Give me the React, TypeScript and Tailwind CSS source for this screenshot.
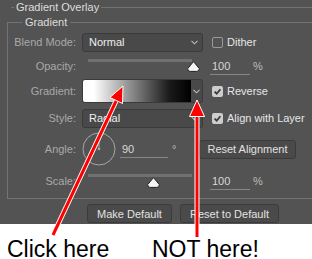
import React from "react"

const Chevron = () => (
  <svg width="7" height="5" viewBox="0 0 7 5" className="shrink-0">
    <polyline points="0.5,0.8 3.5,3.8 6.5,0.8" fill="none" stroke="#bdbdbd" strokeWidth="1.1" />
  </svg>
)

const Check = ({ checked, label }: { checked?: boolean; label: string }) => (
  <div className="flex items-center ml-[9px]">
    {checked ? (
      <div className="w-[11px] h-[11px] rounded-[2px] bg-[#cdcdcd] flex items-center justify-center">
        <svg width="9" height="9" viewBox="0 0 9 9">
          <path d="M1.6 4.6 L3.7 6.7 L7.4 2.2" fill="none" stroke="#3a3a3a" strokeWidth="1.8" />
        </svg>
      </div>
    ) : (
      <div className="w-[11px] h-[11px] rounded-[2px] border border-[#9a9a9a]" />
    )}
    <span className="ml-[4px] text-[#e6e6e6]">{label}</span>
  </div>
)

const Thumb = () => (
  <svg width="13" height="11" viewBox="0 0 13 11">
    <path d="M6.5 0.6 L12.3 7.6 Q12.5 10.4 9.8 10.4 H3.2 Q0.5 10.4 0.7 7.6 Z" fill="#f4f4f4" stroke="#1e1e1e" strokeWidth="1" />
  </svg>
)

// track + thumb, thumb sits over the track
const Slider = ({ thumb, trackTop, thumbTop }: { thumb: number; trackTop: number; thumbTop: number }) => (
  <div className="relative w-[121px] h-full">
    <div className="absolute left-[6px] w-[104px] h-[3px] bg-[#707070]" style={{ top: trackTop }} />
    <div className="absolute" style={{ left: thumb, top: thumbTop }}>
      <Thumb />
    </div>
  </div>
)

const Value = ({ value }: { value: string }) => (
  <>
    <div className="ml-[7px] w-[40px] h-[17px] flex items-center border-b border-[#858585] pl-[2px] text-[#d8d8d8]">
      {value}
    </div>
    <span className="ml-[3px] text-[#bdbdbd]">%</span>
  </>
)

const Label = ({ children }: { children: React.ReactNode }) => (
  <div className="w-[68px] text-right text-[#a9a9a9]">{children}</div>
)

export default function App() {
  return (
    <div className="relative w-[312px] h-[259px] overflow-hidden bg-white font-['Liberation_Sans',Arial,sans-serif]">
      <div className="h-[224px] bg-[#535353] text-[11px] leading-[14px]">
        <div className="flex items-center h-[14px]">
          <div className="ml-[11px] w-[3px] h-px bg-[#737373]" />
          <span className="px-[2px] text-[#dedede]">Gradient Overlay</span>
          <div className="flex-1 h-px bg-[#737373]" />
        </div>

        <div className="ml-[7px] mt-[8px] border-t border-l border-b border-[#737373] pb-[3px]">
          <div className="-mt-[8px] ml-[14px] w-fit h-[14px] px-[3px] bg-[#535353] text-[#dedede]">Gradient</div>

          <div className="flex items-center h-[26px]">
            <Label>Blend Mode:</Label>
            <div className="ml-[6px] w-[121px] h-[19px] flex items-center justify-between pl-[6px] pr-[4px] bg-[#494949] border border-[#3a3a3a] rounded-[3px] text-[#efefef]">
              <span>Normal</span>
              <Chevron />
            </div>
            <Check label="Dither" />
          </div>

          <div className="flex items-center h-[22px]">
            <Label>Opacity:</Label>
            <div className="ml-[6px] h-full">
              <Slider thumb={105} trackTop={4} thumbTop={6} />
            </div>
            <Value value="100" />
          </div>

          <div className="flex items-center h-[28px]">
            <Label>Gradient:</Label>
            <div className="ml-[6px] w-[121px] h-[24px] flex bg-[#494949] border border-[#3a3a3a] rounded-[3px] overflow-hidden">
              <div className="w-[108px] h-full bg-[linear-gradient(to_right,#ffffff_10%,#8a8a8a_45%,#1a1a1a_80%,#000000_100%)]" />
              <div className="flex-1 flex items-center justify-center">
                <Chevron />
              </div>
            </div>
            <Check checked label="Reverse" />
          </div>

          <div className="flex items-center h-[26px]">
            <Label>Style:</Label>
            <div className="ml-[6px] w-[121px] h-[19px] flex items-center justify-between pl-[6px] pr-[4px] bg-[#494949] border border-[#3a3a3a] rounded-[3px] text-[#efefef]">
              <span>Radial</span>
              <Chevron />
            </div>
            <Check checked label="Align with Layer" />
          </div>

          <div className="flex items-center h-[36px]">
            <Label>Angle:</Label>
            <div className="ml-[6px] w-[117px] flex items-center">
              <svg width="34" height="34" viewBox="0 0 34 34" className="shrink-0">
                <circle cx="17" cy="17" r="16" fill="none" stroke="#a6a6a6" strokeWidth="1" />
                <line x1="17" y1="17" x2="17" y2="3" stroke="#a6a6a6" strokeWidth="1" />
                <circle cx="17" cy="17" r="1.3" fill="#a6a6a6" />
              </svg>
              <div className="ml-[4px] w-[48px] h-[17px] flex items-center border-b border-[#858585] pl-[2px] text-[#d8d8d8]">90</div>
              <span className="ml-[4px] text-[#bdbdbd]">°</span>
            </div>
            <button className="w-[97px] h-[19px] bg-[#4a4a4a] border border-[#3b3b3b] rounded-[3px] text-[#e2e2e2] text-[11px]">
              Reset Alignment
            </button>
          </div>

          <div className="flex items-center h-[28px]">
            <Label>Scale:</Label>
            <div className="ml-[6px] h-full">
              <Slider thumb={65} trackTop={7} thumbTop={10} />
            </div>
            <Value value="100" />
          </div>
        </div>

        <div className="mt-[5px] ml-[87px] flex gap-[8px]">
          <button className="w-[85px] h-[19px] bg-[#4a4a4a] border border-[#3b3b3b] rounded-[3px] text-[#e2e2e2] text-[11px]">
            Make Default
          </button>
          <button className="w-[99px] h-[19px] bg-[#4a4a4a] border border-[#3b3b3b] rounded-[3px] text-[#e2e2e2] text-[11px]">
            Reset to Default
          </button>
        </div>
      </div>

      <div className="flex mt-[17px] pl-[7px] text-[23px] leading-[17px] text-black">
        <span className="w-[145px]">Click here</span>
        <span>NOT here!</span>
      </div>

      <svg className="absolute inset-0 pointer-events-none" width="312" height="259" viewBox="0 0 312 259">
        <line x1="53" y1="235" x2="117" y2="99" stroke="#ffffff" strokeWidth="5" />
        <line x1="53" y1="235" x2="117" y2="99" stroke="#ff0000" strokeWidth="3" />
        <polygon points="123,86 122.5,103.5 109.9,97.5" fill="#ff0000" stroke="#ffffff" strokeWidth="1" />
        <line x1="197" y1="237" x2="197" y2="114" stroke="#ffffff" strokeWidth="5" />
        <line x1="197" y1="237" x2="197" y2="114" stroke="#ff0000" strokeWidth="3" />
        <polygon points="197,100 204.5,116.5 189.5,116.5" fill="#ff0000" stroke="#ffffff" strokeWidth="1" />
      </svg>
    </div>
  )
}
